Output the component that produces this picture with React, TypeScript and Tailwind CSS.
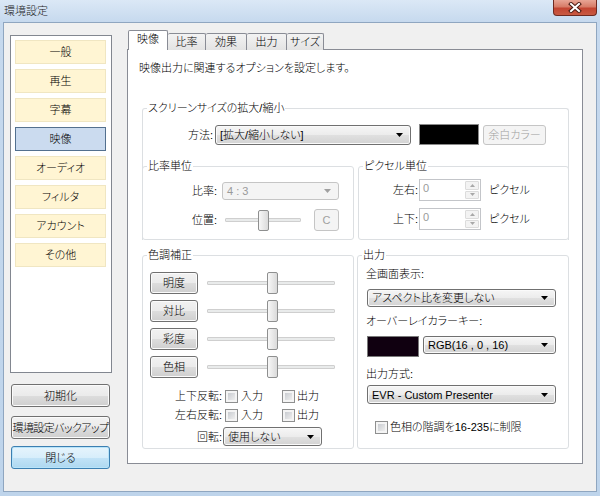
import React from "react";

const winBtn =
  "rounded-[3px] border border-[#707070] bg-[linear-gradient(#f2f2f2_0%,#ebebeb_50%,#dddddd_51%,#cfcfcf_100%)] shadow-[inset_0_0_0_1px_#fbfbfb]";

const Arrow = ({ color = "#000" }: { color?: string }) => (
  <svg width="7" height="4" viewBox="0 0 7 4">
    <polygon points="0,0 7,0 3.5,4" fill={color} />
  </svg>
);

function Combo({ text, className = "", disabled = false }: { text: string; className?: string; disabled?: boolean }) {
  return (
    <div
      className={`flex items-center justify-between rounded-[3px] border pl-[4px] pr-[7px] ${
        disabled
          ? "border-[#c5c5c5] bg-[#f4f4f4] text-[#9a9a9a]"
          : "border-[#707070] bg-[linear-gradient(#f6f6f6_0%,#ececec_50%,#e0e0e0_51%,#d3d3d3_100%)] shadow-[inset_0_0_0_1px_#fafafa]"
      } ${className}`}
    >
      <span className="whitespace-nowrap leading-[14px]">{text}</span>
      <Arrow color={disabled ? "#a0a0a0" : "#000"} />
    </div>
  );
}

function Group({ label, className = "", children }: { label: string; className?: string; children?: React.ReactNode }) {
  return (
    <div className={`relative rounded-[3px] border border-[#dcdfe2] ${className}`}>
      <span className="absolute -top-[8px] left-[4px] bg-white px-[1px] leading-[14px] whitespace-nowrap">{label}</span>
      {children}
    </div>
  );
}

function Slider({ className = "", thumb = "" }: { className?: string; thumb?: string }) {
  return (
    <div className={`relative flex items-center ${className}`}>
      <div className="h-[4px] w-full rounded-[1px] border border-[#cfcfcf] bg-[#e9ebeb]" />
      <div
        className={`absolute top-0 h-full w-[11px] rounded-[2px] border border-[#8e8f8f] bg-[linear-gradient(90deg,#f7f7f7,#dadada)] ${thumb}`}
      />
    </div>
  );
}

function Check() {
  return (
    <div className="h-[13px] w-[13px] shrink-0 border border-[#8e8f8f] bg-[#f4f4f4] p-[2px]">
      <div className="h-full w-full bg-[linear-gradient(135deg,#c9ccd1,#eeeeee)]" />
    </div>
  );
}

function Spin({ className = "" }: { className?: string }) {
  return (
    <div className={`flex border border-[#c3c5c9] bg-white ${className}`}>
      <span className="flex-1 pl-[3px] pt-[1px] leading-[14px] text-[#9a9a9a]">0</span>
      <div className="flex w-[16px] flex-col gap-[1px] p-[1px]">
        <div className="flex flex-1 items-center justify-center rounded-[1px] border border-[#dcdcdc] bg-[#f3f3f3]">
          <svg width="5" height="3" viewBox="0 0 5 3">
            <polygon points="0,3 5,3 2.5,0" fill="#a8a8a8" />
          </svg>
        </div>
        <div className="flex flex-1 items-center justify-center rounded-[1px] border border-[#dcdcdc] bg-[#f3f3f3]">
          <svg width="5" height="3" viewBox="0 0 5 3">
            <polygon points="0,0 5,0 2.5,3" fill="#a8a8a8" />
          </svg>
        </div>
      </div>
    </div>
  );
}

const navItems = ["一般", "再生", "字幕", "映像", "オーディオ", "フィルタ", "アカウント", "その他"];

export default function App() {
  return (
    <div className="flex h-[496px] w-[600px] flex-col overflow-hidden bg-[linear-gradient(#dbe8f6,#c6d9ee_22px,#bed4eb)] font-['Liberation_Sans','Noto_Sans_CJK_JP',sans-serif] text-[11px] font-light text-black [font-feature-settings:'palt']">
      {/* title bar */}
      <div className="flex h-[22px] shrink-0 items-start justify-between">
        <span className="ml-[4px] mt-[4px] text-[11px] leading-[14px] text-[#1a1a1a]">環境設定</span>
        <div className="mr-[3px] flex h-[16px] w-[44px] items-center justify-center rounded-b-[4px] border border-t-0 border-[#6e2a21] bg-[linear-gradient(#e8a595_0%,#d77c68_45%,#c34532_55%,#c85a43_100%)]">
          <svg width="14" height="11" viewBox="0 0 14 11">
            <path d="M3 2 L11 9 M11 2 L3 9" stroke="#4a1a12" strokeWidth="4" strokeLinecap="square" />
            <path d="M3 2 L11 9 M11 2 L3 9" stroke="#ffffff" strokeWidth="2" strokeLinecap="square" />
          </svg>
        </div>
      </div>

      {/* client area */}
      <div className="ml-[3px] flex h-[470px] w-[594px] border border-[#8fa6c0] bg-[#f0f0f0]">
        {/* left column */}
        <div className="ml-[6px] mt-[12px] flex w-[102px] flex-col">
          <div className="flex h-[338px] flex-col gap-[5px] border border-[#828790] bg-white pl-[4px] pt-[4px]">
            {navItems.map((t) => (
              <div
                key={t}
                className={`flex h-[24px] w-[91px] items-center justify-center border leading-[14px] ${
                  t === "映像" ? "border-[#53708f] bg-[#cbdbef]" : "border-[#f0e6c2] bg-[#fff5d3]"
                }`}
              >
                {t}
              </div>
            ))}
          </div>
          <div className={`ml-[1px] mt-[11px] flex h-[23px] w-[99px] items-center justify-center leading-[14px] ${winBtn}`}>初期化</div>
          <div className={`ml-[1px] mt-[9px] flex h-[23px] w-[99px] items-center justify-center overflow-hidden whitespace-nowrap leading-[14px] tracking-[-0.6px] ${winBtn}`}>
            環境設定バックアップ
          </div>
          <div className="ml-[1px] mt-[7px] flex h-[23px] w-[99px] items-center justify-center rounded-[3px] border border-[#3c7fb1] bg-[linear-gradient(#e6f4fc_0%,#d7eefb_50%,#c2e3f7_51%,#aed8f0_100%)] leading-[14px] shadow-[inset_0_0_0_1px_#b8e4fa]">
            閉じる
          </div>
        </div>

        {/* right column */}
        <div className="ml-[15px] mt-[7px] flex flex-col">
          {/* tabs */}
          <div className="relative z-10 -mb-px ml-[1px] flex items-end">
            <div className="flex h-[20px] w-[40px] items-center justify-center rounded-t-[2px] border border-b-0 border-[#898c95] bg-white pb-[3px] leading-[14px]">
              映像
            </div>
            {[
              ["比率", "w-[38px]"],
              ["効果", "w-[41px]"],
              ["出力", "w-[40px]"],
              ["サイズ", "w-[37px]"],
            ].map(([t, w]) => (
              <div
                key={t}
                className={`flex h-[17px] items-center justify-center rounded-t-[2px] border border-l-0 border-b-0 border-[#898c95] bg-[linear-gradient(#f3f3f3,#e3e3e3)] leading-[14px] ${w}`}
              >
                {t}
              </div>
            ))}
          </div>

          {/* panel */}
          <div className="flex h-[415px] w-[456px] flex-col border border-[#898c95] bg-white">
            <div className="ml-[11px] mt-[11px] leading-[14px]">映像出力に関連するオプションを設定します。</div>

            {/* screen size group */}
            <div className="relative ml-[14px] mt-[33px] flex w-[427px] flex-col rounded-t-[3px] border border-b-0 border-[#dcdfe2]">
              <span className="absolute -top-[8px] left-[4px] bg-white px-[1px] leading-[14px]">スクリーンサイズの拡大/縮小</span>
              <div className="mt-[15px] flex items-center">
                <span className="w-[70px] text-right leading-[14px]">方法:</span>
                <Combo text="[拡大/縮小しない]" className="ml-[2px] h-[20px] w-[196px]" />
                <div className="ml-[8px] h-[21px] w-[60px] border border-[#8a8a8a] bg-black" />
                <div className="ml-[4px] flex h-[20px] w-[63px] items-center justify-center rounded-[3px] border border-[#c5c5c5] bg-[#f4f4f4] leading-[14px] text-[#a0a0a0]">
                  余白カラー
                </div>
              </div>
              <div className="-mx-px mt-[21px] flex justify-between">
                <Group label="比率単位" className="h-[74px] w-[212px]">
                  <div className="mt-[15px] flex items-center">
                    <span className="w-[74px] text-right leading-[14px]">比率:</span>
                    <Combo text="4 : 3" disabled className="ml-[5px] h-[18px] w-[117px]" />
                  </div>
                  <div className="mt-[9px] flex items-center">
                    <span className="w-[74px] text-right leading-[14px]">位置:</span>
                    <Slider className="ml-[8px] h-[21px] w-[76px]" thumb="left-[33px]" />
                    <div className="ml-[13px] flex h-[22px] w-[25px] items-center justify-center rounded-[3px] border border-[#c5c5c5] bg-[#f4f4f4] leading-[14px] text-[#a0a0a0]">
                      C
                    </div>
                  </div>
                </Group>
                <Group label="ピクセル単位" className="h-[74px] w-[211px]">
                  <div className="mt-[12px] flex items-center">
                    <span className="w-[59px] text-right leading-[14px]">左右:</span>
                    <Spin className="ml-[1px] h-[22px] w-[62px]" />
                    <span className="ml-[8px] leading-[14px]">ピクセル</span>
                  </div>
                  <div className="mt-[7px] flex items-center">
                    <span className="w-[59px] text-right leading-[14px]">上下:</span>
                    <Spin className="ml-[1px] h-[22px] w-[62px]" />
                    <span className="ml-[8px] leading-[14px]">ピクセル</span>
                  </div>
                </Group>
              </div>
            </div>

            {/* lower groups */}
            <div className="ml-[14px] mt-[15px] flex gap-[3px]">
              <Group label="色調補正" className="h-[194px] w-[212px]">
                <div className="mt-[16px] flex flex-col gap-[6px]">
                  {["明度", "対比", "彩度", "色相"].map((t) => (
                    <div key={t} className="flex items-center">
                      <div className={`ml-[7px] flex h-[22px] w-[48px] items-center justify-center leading-[14px] ${winBtn}`}>{t}</div>
                      <Slider className="ml-[9px] h-[22px] w-[128px]" thumb="left-[60px]" />
                    </div>
                  ))}
                </div>
                <div className="mt-[10px] flex h-[16px] items-center">
                  <span className="w-[79px] text-right leading-[14px]">上下反転:</span>
                  <div className="ml-[3px] flex w-[57px] items-center">
                    <Check />
                    <span className="ml-[3px] leading-[14px]">入力</span>
                  </div>
                  <Check />
                  <span className="ml-[2px] leading-[14px]">出力</span>
                </div>
                <div className="mt-[3px] flex h-[16px] items-center">
                  <span className="w-[79px] text-right leading-[14px]">左右反転:</span>
                  <div className="ml-[3px] flex w-[57px] items-center">
                    <Check />
                    <span className="ml-[3px] leading-[14px]">入力</span>
                  </div>
                  <Check />
                  <span className="ml-[2px] leading-[14px]">出力</span>
                </div>
                <div className="mt-[4px] flex items-center">
                  <span className="w-[79px] text-right leading-[14px]">回転:</span>
                  <Combo text="使用しない" className="ml-[1px] h-[19px] w-[99px]" />
                </div>
              </Group>

              <Group label="出力" className="h-[194px] w-[212px]">
                <div className="ml-[8px] mt-[11px] leading-[14px]">全画面表示:</div>
                <Combo text="アスペクト比を変更しない" className="ml-[9px] mt-[8px] h-[18px] w-[189px]" />
                <div className="ml-[8px] mt-[7px] leading-[14px]">オーバーレイカラーキー:</div>
                <div className="mt-[8px] flex items-start">
                  <div className="ml-[9px] h-[21px] w-[52px] border border-[#7a7a7a] bg-[#100010]" />
                  <Combo text="RGB(16 , 0 , 16)" className="ml-[4px] h-[18px] w-[133px]" />
                </div>
                <div className="ml-[8px] mt-[10px] leading-[14px]">出力方式:</div>
                <Combo text="EVR - Custom Presenter" className="ml-[9px] mt-[4px] h-[19px] w-[189px]" />
                <div className="ml-[17px] mt-[16px] flex items-center">
                  <Check />
                  <span className="ml-[2px] leading-[14px]">色相の階調を16-235に制限</span>
                </div>
              </Group>
            </div>
          </div>
        </div>
      </div>
    </div>
  );
}
